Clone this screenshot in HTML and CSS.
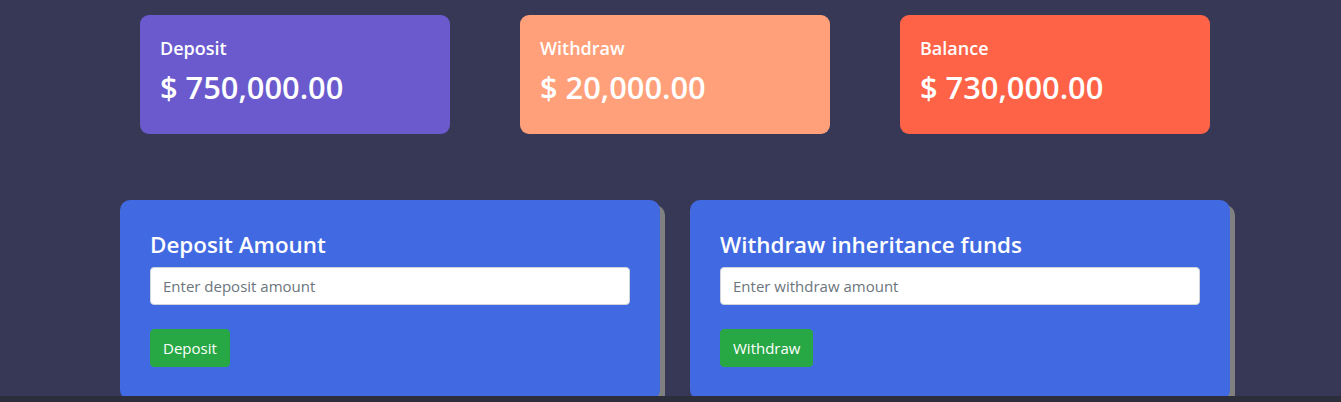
FILE: index.html
```html
<!DOCTYPE html>
<html>
<head>
<meta charset="utf-8">
<link rel="stylesheet" href="styles.css">
</head>
<body>
<div class="page">
  <div class="stats">
    <div class="stat stat-deposit">
      <div class="stat-label">Deposit</div>
      <div class="stat-value">$ 750,000.00</div>
    </div>
    <div class="stat stat-withdraw">
      <div class="stat-label">Withdraw</div>
      <div class="stat-value">$ 20,000.00</div>
    </div>
    <div class="stat stat-balance">
      <div class="stat-label">Balance</div>
      <div class="stat-value">$ 730,000.00</div>
    </div>
  </div>
  <div class="forms">
    <div class="form-card">
      <h2 class="form-title">Deposit Amount</h2>
      <input class="form-input" type="text" placeholder="Enter deposit amount">
      <button class="btn">Deposit</button>
    </div>
    <div class="form-card">
      <h2 class="form-title">Withdraw inheritance funds</h2>
      <input class="form-input" type="text" placeholder="Enter withdraw amount">
      <button class="btn">Withdraw</button>
    </div>
  </div>
</div>
<div class="bottom-strip"></div>
</body>
</html>
```
FILE: styles.css
```css
html, body {
  margin: 0;
  padding: 0;
  height: 100%;
  overflow: hidden;
}
body {
  background: #373856;
  font-family: "Open Sans", "Noto Sans", sans-serif;
  color: #fff;
}
.page {
  padding-left: 120px;
  width: 1110px;
}
.stats {
  display: flex;
  gap: 70px;
  padding: 15px 0 0 20px;
}
.stat {
  width: 310px;
  height: 119px;
  box-sizing: border-box;
  border-radius: 9px;
  padding: 20px 20px;
}
.stat-deposit { background: #6a5acd; }
.stat-withdraw { background: #ffa07a; }
.stat-balance { background: #ff6347; }
.stat-label {
  font-size: 18px;
  font-weight: 600;
  line-height: 26px;
}
.stat-value {
  font-size: 30.8px;
  font-weight: 600;
  line-height: 40px;
  margin-top: 6px;
}
.forms {
  display: flex;
  gap: 30px;
  margin-top: 66px;
}
.form-card {
  width: 540px;
  box-sizing: border-box;
  background: #4169e1;
  border-radius: 10px;
  box-shadow: 5px 5px 0 #808080;
  padding: 29px 30px 30px;
  height: 200px;
}
.form-title {
  margin: 0;
  font-size: 22.4px;
  font-weight: 600;
  line-height: 32px;
}
.form-input {
  display: block;
  box-sizing: border-box;
  width: 480px;
  height: 38px;
  margin-top: 6px;
  border: 1px solid #ced4da;
  border-radius: 4px;
  padding: 6px 12px;
  font-family: inherit;
  font-size: 15px;
  color: #495057;
  background: #fff;
}
.form-input::placeholder { color: #6c757d; }
.btn {
  display: block;
  margin-top: 24px;
  height: 38px;
  padding: 6px 12px;
  border: 1px solid #28a745;
  border-radius: 4px;
  background: #28a745;
  color: #fff;
  font-family: inherit;
  font-size: 15px;
}
.bottom-strip {
  position: fixed;
  left: 0;
  right: 0;
  bottom: 0;
  height: 6px;
  background: #2c2e3b;
}
```
